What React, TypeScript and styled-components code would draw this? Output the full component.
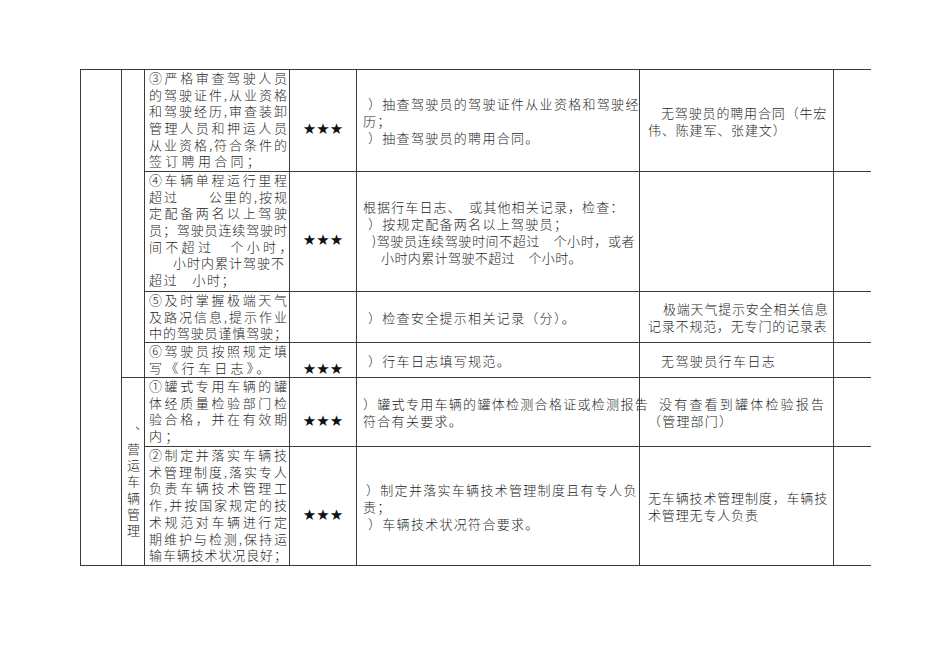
import React from "react";
import styled, { createGlobalStyle } from "styled-components";

const Global = createGlobalStyle`
  html, body { margin: 0; padding: 0; background: #ffffff; }
  #root { width: 950px; min-height: 672px; }
`;

const Page = styled.div`
  padding: 69px 0 0 80px;
  width: 950px;
  height: 672px;
  box-sizing: border-box;
  overflow: hidden;
`;

const Table = styled.table`
  border-collapse: collapse;
  table-layout: fixed;
  width: 790px;
  font-family: "Noto Sans CJK SC", "Noto Sans", sans-serif;
  font-weight: 300;
  color: #262626;
  font-size: 13px;
  line-height: 17px;
`;

const Row = styled.tr<{ $h: number }>`
  height: ${(p) => p.$h}px;
`;

const Cell = styled.td<{ $last?: boolean; $align?: "top" | "middle" | "bottom" }>`
  border: 1px solid #3a3a3a;
  ${(p) => (p.$last ? "border-right: none;" : "")}
  padding: 0;
  vertical-align: ${(p) => p.$align ?? "top"};
  overflow: visible;
  white-space: nowrap;
`;

const ItemCell = styled(Cell)`
  padding: 0 2px 0 4px;
`;

const ItemLine = styled.div<{ $justify?: boolean; $indent?: number; $ls?: number }>`
  height: 16.7px;
  line-height: 16.7px;
  padding-left: ${(p) => p.$indent ?? 0}px;
  ${(p) =>
    p.$justify
      ? "text-align: justify; text-align-last: justify; letter-spacing: 0;"
      : `letter-spacing: ${p.$ls ?? 3.3}px;`}
`;

const VerticalCell = styled(Cell)`
  padding-top: 48px;
`;

const VerticalText = styled.div`
  writing-mode: vertical-rl;
  line-height: 23px;
  width: 23px;
  letter-spacing: 3.3px;
  margin: 0 auto;
`;

const StarCell = styled(Cell)`
  text-align: center;
  padding-top: 17px;
  font-family: "DejaVu Sans", sans-serif;
  font-weight: 400;
  font-size: 15px;
  line-height: 16px;
  letter-spacing: 0;
  color: #111;
`;

const CheckCell = styled(Cell)<{ $ls: number }>`
  padding-left: 6px;
  letter-spacing: ${(p) => p.$ls}px;
`;

const FindCell = styled(Cell)<{ $ls: number }>`
  padding-left: 8px;
  letter-spacing: ${(p) => p.$ls}px;
`;

const TextLine = styled.div<{ $indent?: number; $ls?: number }>`
  padding-left: ${(p) => p.$indent ?? 0}px;
  height: 17px;
  ${(p) => (p.$ls !== undefined ? `letter-spacing: ${p.$ls}px;` : "")}
`;

type L = { t: string; j?: boolean; i?: number; ls?: number };

type RowData = {
  h: number;
  item: L[];
  stars: boolean;
  check: { ls: number; lines: L[] };
  find: { ls: number; lines: L[] };
};

const rows: RowData[] = [
  {
    h: 102,
    item: [
      { t: "③严格审查驾驶人员", j: true },
      { t: "的驾驶证件,从业资格", j: true },
      { t: "和驾驶经历,审查装卸", j: true },
      { t: "管理人员和押运人员", j: true },
      { t: "从业资格,符合条件的", j: true },
      { t: "签订聘用合同；" },
    ],
    stars: true,
    check: {
      ls: 1.3,
      lines: [
        { t: "）抽查驾驶员的驾驶证件从业资格和驾驶经", i: 5 },
        { t: "历；" },
        { t: "）抽查驾驶员的聘用合同。", i: 5 },
      ],
    },
    find: {
      ls: 0.85,
      lines: [{ t: "无驾驶员的聘用合同（牛宏", i: 13 }, { t: "伟、陈建军、张建文）" }],
    },
  },
  {
    h: 120,
    item: [
      { t: "④车辆单程运行里程", j: true },
      { t: "超过\u3000\u3000公里的,按规", j: true },
      { t: "定配备两名以上驾驶", j: true },
      { t: "员；驾驶员连续驾驶时", j: true },
      { t: "间不超过\u3000个小时，" },
      { t: "小时内累计驾驶不", i: 24, ls: 1 },
      { t: "超过\u3000小时；", ls: 1.5 },
    ],
    stars: true,
    check: {
      ls: 1.1,
      lines: [
        { t: "根据行车日志、\u3000或其他相关记录，检查：" },
        { t: "）按规定配备两名以上驾驶员；", i: 5, ls: 1.3 },
        { t: ")驾驶员连续驾驶时间不超过\u3000个小时，或者", i: 9, ls: 0.6 },
        { t: "小时内累计驾驶不超过\u3000个小时。", i: 18, ls: 0.4 },
      ],
    },
    find: { ls: 0.85, lines: [] },
  },
  {
    h: 51,
    item: [
      { t: "⑤及时掌握极端天气", j: true },
      { t: "及路况信息,提示作业", j: true },
      { t: "中的驾驶员谨慎驾驶；", j: true },
    ],
    stars: false,
    check: { ls: 1.3, lines: [{ t: "）检查安全提示相关记录（分）。", i: 5 }] },
    find: {
      ls: 0.8,
      lines: [{ t: "极端天气提示安全相关信息", i: 15 }, { t: "记录不规范，无专门的记录表" }],
    },
  },
  {
    h: 35,
    item: [{ t: "⑥驾驶员按照规定填", j: true }, { t: "写《行车日志》。" }],
    stars: true,
    check: { ls: 1.3, lines: [{ t: "）行车日志填写规范。", i: 5 }] },
    find: { ls: 1.4, lines: [{ t: "无驾驶员行车日志", i: 13 }] },
  },
  {
    h: 69,
    item: [
      { t: "①罐式专用车辆的罐", j: true },
      { t: "体经质量检验部门检", j: true },
      { t: "验合格，并在有效期", j: true },
      { t: "内；" },
    ],
    stars: true,
    check: {
      ls: 1.3,
      lines: [{ t: "）罐式专用车辆的罐体检测合格证或检测报告" }, { t: "符合有关要求。" }],
    },
    find: {
      ls: 2.2,
      lines: [{ t: "没有查看到罐体检验报告", i: 11 }, { t: "（管理部门）", ls: 1.2 }],
    },
  },
  {
    h: 119,
    item: [
      { t: "②制定并落实车辆技", j: true },
      { t: "术管理制度,落实专人", j: true },
      { t: "负责车辆技术管理工", j: true },
      { t: "作,并按国家规定的技", j: true },
      { t: "术规范对车辆进行定", j: true },
      { t: "期维护与检测,保持运", j: true },
      { t: "输车辆技术状况良好；", j: true },
    ],
    stars: true,
    check: {
      ls: 1.3,
      lines: [
        { t: "）制定并落实车辆技术管理制度且有专人负", i: 3 },
        { t: "责；" },
        { t: "）车辆技术状况符合要求。", i: 5 },
      ],
    },
    find: {
      ls: 0.85,
      lines: [{ t: "无车辆技术管理制度，车辆技" }, { t: "术管理无专人负责" }],
    },
  },
];

export default function App() {
  return (
    <>
      <Global />
      <Page lang="zh-CN">
        <Table>
          <colgroup>
            <col style={{ width: 41 }} />
            <col style={{ width: 23 }} />
            <col style={{ width: 145 }} />
            <col style={{ width: 67 }} />
            <col style={{ width: 283 }} />
            <col style={{ width: 194 }} />
            <col style={{ width: 37 }} />
          </colgroup>
          <tbody>
            {rows.map((r, idx) => (
              <Row key={idx} $h={r.h}>
                {idx === 0 && <Cell rowSpan={6} />}
                {idx === 0 && <Cell rowSpan={4} />}
                {idx === 4 && (
                  <VerticalCell rowSpan={2}>
                    <VerticalText>、营运车辆管理</VerticalText>
                  </VerticalCell>
                )}
                <ItemCell>
                  {r.item.map((l, k) => (
                    <ItemLine key={k} $justify={l.j} $indent={l.i} $ls={l.ls}>
                      {l.t}
                    </ItemLine>
                  ))}
                </ItemCell>
                <StarCell $align="middle">{r.stars ? "★★★" : ""}</StarCell>
                <CheckCell $align="middle" $ls={r.check.ls}>
                  {r.check.lines.map((l, k) => (
                    <TextLine key={k} $indent={l.i} $ls={l.ls}>
                      {l.t}
                    </TextLine>
                  ))}
                </CheckCell>
                <FindCell $align="middle" $ls={r.find.ls}>
                  {r.find.lines.map((l, k) => (
                    <TextLine key={k} $indent={l.i} $ls={l.ls}>
                      {l.t}
                    </TextLine>
                  ))}
                </FindCell>
                <Cell $last />
              </Row>
            ))}
          </tbody>
        </Table>
      </Page>
    </>
  );
}
